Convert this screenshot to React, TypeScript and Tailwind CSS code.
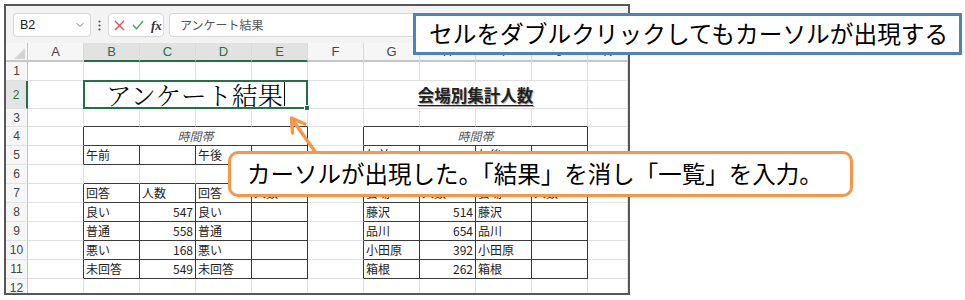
import { ChevronDown } from 'lucide-react'

const COLS = ['A', 'B', 'C', 'D', 'E', 'F', 'G', 'H', 'I', 'J', 'K']

// row heights of rows 1..12
const ROW_H: Record<number, string> = {
  1: 'h-[19px]',
  2: 'h-[31px]',
  3: 'h-[18px]',
  4: 'h-[19px]',
  5: 'h-[20px]',
  6: 'h-[19px]',
  7: 'h-[20px]',
  8: 'h-[19px]',
  9: 'h-[19px]',
  10: 'h-[20px]',
  11: 'h-[19px]',
  12: 'h-[19px]',
}

const LEFT: Record<number, string[]> = {
  5: ['午前', '', '午後', ''],
  7: ['回答', '人数', '回答', '人数'],
  8: ['良い', '547', '良い', ''],
  9: ['普通', '558', '普通', ''],
  10: ['悪い', '168', '悪い', ''],
  11: ['未回答', '549', '未回答', ''],
}

const RIGHT: Record<number, string[]> = {
  5: ['午前', '', '午後', ''],
  7: ['会場', '人数', '会場', '人数'],
  8: ['藤沢', '514', '藤沢', ''],
  9: ['品川', '654', '品川', ''],
  10: ['小田原', '392', '小田原', ''],
  11: ['箱根', '262', '箱根', ''],
}

const TABLE_ROWS = [4, 5, 7, 8, 9, 10, 11]
const inTableCol = (c: number) => (c >= 1 && c <= 4) || (c >= 6 && c <= 9)

const CELL =
  "flex shrink-0 items-center overflow-hidden whitespace-nowrap border-r border-b px-[2px] text-[12px] leading-none text-[#222] font-['Noto_Sans_CJK_JP',sans-serif]"

function Row({ r }: { r: number }) {
  const cells = []
  const selected = r === 2
  cells.push(
    <div
      key="h"
      className={`flex w-[22px] shrink-0 items-center justify-center border-b border-b-[#e1e1e1] text-[12px] font-['Liberation_Sans',sans-serif] ${
        selected
          ? 'border-r-2 border-r-[#217346] bg-[#e4e4e4] text-[#217346]'
          : 'border-r border-r-[#c6c6c6] bg-[#f6f6f6] text-[#444]'
      }`}
    >
      {r}
    </div>
  )

  for (let c = 0; c < 11; c++) {
    const isTable = TABLE_ROWS.includes(r)
    if (r === 2 && c === 1) {
      cells.push(
        <div
          key={c}
          className="relative flex w-[224px] shrink-0 items-end justify-center border-r border-b border-r-[#e1e1e1] border-b-[#e1e1e1] pb-[1px]"
        >
          <span className="text-[25.5px] leading-none text-black underline decoration-1 underline-offset-[3px] font-['Noto_Serif_CJK_JP','Noto_Sans_CJK_JP',serif] font-light">
            アンケート結果
          </span>
          <span className="mb-[1px] ml-[1px] h-[25px] w-px bg-black" />
          <div className="absolute -top-[1px] -right-[1px] -bottom-[1px] -left-[1px] z-10 border-2 border-[#217346]" />
          <div className="absolute -right-[3px] -bottom-[3px] z-10 h-[6px] w-[6px] border border-white bg-[#217346]" />
        </div>
      )
      c += 3
      continue
    }
    if (r === 2 && c === 6) {
      cells.push(
        <div
          key={c}
          className="flex w-[224px] shrink-0 items-center justify-center border-r border-b border-r-[#e1e1e1] border-b-[#e1e1e1] pt-[1px]"
        >
          <span className="text-[16.5px] font-bold leading-none text-[#222] underline decoration-1 underline-offset-[3px] [text-shadow:1px_1px_1px_rgba(0,0,0,0.35)] font-['Noto_Sans_CJK_JP',sans-serif]">
            会場別集計人数
          </span>
        </div>
      )
      c += 3
      continue
    }
    if (r === 4 && (c === 1 || c === 6)) {
      cells.push(
        <div
          key={c}
          className={`${CELL} w-[224px] justify-center border-r-[#3a3a3a] border-b-[#3a3a3a] italic text-[#555]`}
        >
          時間帯
        </div>
      )
      c += 3
      continue
    }

    const darkR = isTable && (inTableCol(c) || c === 0 || c === 5)
    const darkB = inTableCol(c) && (isTable || TABLE_ROWS.includes(r + 1))
    let text = ''
    if (c >= 1 && c <= 4 && LEFT[r]) text = LEFT[r][c - 1]
    if (c >= 6 && c <= 9 && RIGHT[r]) text = RIGHT[r][c - 6]
    const num = /^\d+$/.test(text)
    cells.push(
      <div
        key={c}
        className={`${CELL} ${c === 10 ? 'w-[40px]' : 'w-[56px]'} ${
          darkR ? 'border-r-[#3a3a3a]' : 'border-r-[#e1e1e1]'
        } ${darkB ? 'border-b-[#3a3a3a]' : 'border-b-[#e1e1e1]'} ${num ? 'justify-end' : ''}`}
      >
        {text}
      </div>
    )
  }

  return <div className={`flex ${ROW_H[r]}`}>{cells}</div>
}

function FormulaBar() {
  return (
    <div className="flex h-[37px] shrink-0 items-start bg-[#f3f3f3] pt-[7px] pr-[8px] pl-[7px]">
      <div className="flex h-[24px] w-[78px] shrink-0 items-center justify-between rounded-[4px] border border-[#d8d8d8] bg-white pr-[4px] pl-[6px] text-[12.5px] text-[#222] font-['Liberation_Sans',sans-serif]">
        <span>B2</span>
        <ChevronDown className="h-[12px] w-[12px] text-[#555]" strokeWidth={1.6} />
      </div>
      <div className="flex h-[24px] w-[17px] shrink-0 items-center justify-center">
        <svg width="3" height="11" viewBox="0 0 3 11">
          <circle cx="1.5" cy="1.5" r="1.1" fill="#555" />
          <circle cx="1.5" cy="5.5" r="1.1" fill="#555" />
          <circle cx="1.5" cy="9.5" r="1.1" fill="#555" />
        </svg>
      </div>
      <div className="flex h-[24px] w-[56px] shrink-0 items-center gap-[7px] rounded-[4px] border border-[#d8d8d8] bg-white pl-[5px]">
        <svg width="11" height="11" viewBox="0 0 11 11">
          <path d="M1 1 L10 10 M10 1 L1 10" stroke="#e5484d" strokeWidth="1.3" fill="none" />
        </svg>
        <svg width="12" height="10" viewBox="0 0 12 10">
          <path d="M1 5 L4.5 8.8 L11 1" stroke="#3aa15a" strokeWidth="1.3" fill="none" />
        </svg>
        <span className="text-[13px] font-bold italic leading-none text-[#333] font-['Liberation_Serif',serif]">fx</span>
      </div>
      <div className="ml-[5px] flex h-[24px] flex-1 items-center rounded-[4px] border border-[#d8d8d8] bg-white pl-[10px] text-[12px] text-[#555] font-['Noto_Sans_CJK_JP',sans-serif]">
        アンケート結果
      </div>
    </div>
  )
}

function ColumnHeaders() {
  return (
    <div className="flex h-[19px] shrink-0">
      <div className="relative w-[22px] shrink-0 border-r border-b-2 border-r-[#c6c6c6] border-b-[#c6c6c6] bg-[#f6f6f6]">
        <svg className="absolute right-[2px] bottom-[1px]" width="11" height="11" viewBox="0 0 11 11">
          <path d="M11 0 L11 11 L0 11 Z" fill="#d4d4d4" />
        </svg>
      </div>
      {COLS.map((col, i) => {
        const sel = i >= 1 && i <= 4
        return (
          <div
            key={col}
            className={`flex shrink-0 items-center justify-center border-r border-b-2 border-r-[#d9d9d9] text-[13px] font-['Liberation_Sans',sans-serif] ${
              i === 10 ? 'w-[40px]' : 'w-[56px]'
            } ${sel ? 'border-b-[#217346] bg-[#e2e2e2] text-[#217346]' : 'border-b-[#c6c6c6] bg-[#f6f6f6] text-[#444]'}`}
          >
            {col}
          </div>
        )
      })}
    </div>
  )
}

export default function App() {
  return (
    <div className="relative h-[300px] w-[965px] overflow-hidden bg-white pt-[4px] pl-[4px]">
      <div className="flex h-[291px] w-[626px] flex-col overflow-hidden border-2 border-[#575757] bg-white">
        <FormulaBar />
        <ColumnHeaders />
        {[1, 2, 3, 4, 5, 6, 7, 8, 9, 10, 11, 12].map((r) => (
          <Row key={r} r={r} />
        ))}
      </div>

      {/* callout: top */}
      <div className="absolute top-[13px] left-[413px] flex h-[42px] w-[549px] items-center border-[3px] border-[#4f81bd] bg-white pl-[13px] text-[23.7px] leading-none text-black font-['Noto_Sans_CJK_JP',sans-serif]">
        セルをダブルクリックしてもカーソルが出現する
      </div>

      {/* arrow */}
      <svg className="absolute top-0 left-0" width="965" height="300" viewBox="0 0 965 300">
        <path d="M316 153 L292 119" stroke="#f79646" strokeWidth="3.5" strokeLinecap="round" fill="none" />
        <path d="M292.5 133 L291.5 118 L305 124" stroke="#f79646" strokeWidth="3.5" strokeLinecap="round" strokeLinejoin="round" fill="none" />
      </svg>

      {/* callout: orange */}
      <div className="absolute top-[151px] left-[228px] flex h-[46px] w-[625px] items-center rounded-[10px] border-[3px] border-[#f79646] bg-white pl-[16px] text-[23.5px] leading-none text-black font-['Noto_Sans_CJK_JP',sans-serif]">
        カーソルが出現した。「結果」を消し「一覧」を入力。
      </div>
    </div>
  )
}
